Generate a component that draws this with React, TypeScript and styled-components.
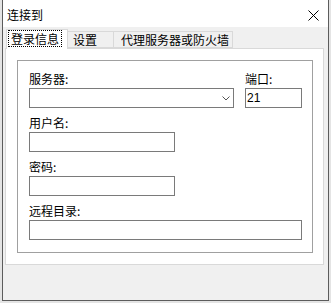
import React from "react";
import styled, { createGlobalStyle } from "styled-components";

const Global = createGlobalStyle`
  * { box-sizing: border-box; }
  html, body { margin: 0; padding: 0; }
  body {
    background: #e4e4e4;
    font-family: "Noto Sans CJK SC", "Noto Sans", sans-serif;
    font-size: 12px;
    color: #000;
  }
`;

const Window = styled.div`
  margin-left: 2px;
  width: 327px;
  height: 301px;
  border: 1px solid #5c5c5c;
  border-top: none;
  background: #f0f0f0;
  display: flex;
  flex-direction: column;
`;

const TitleBar = styled.div`
  height: 27px;
  background: #fff;
  display: flex;
  align-items: center;
  justify-content: space-between;
  padding: 2px 9px 0 4px;
  font-size: 12px;
  line-height: 14px;
`;

const CloseBox = styled.div`
  width: 11px;
  height: 11px;
  display: flex;
  margin-top: 1px;
`;

const TabStrip = styled.div`
  margin: 2px 0 0 3px;
  height: 19px;
  display: flex;
  align-items: flex-end;
  position: relative;
  z-index: 1;
`;

const Tab = styled.div<{ $active?: boolean; $w: number; $pl: number }>`
  width: ${(p) => p.$w}px;
  height: ${(p) => (p.$active ? 20 : 17)}px;
  margin-bottom: ${(p) => (p.$active ? -1 : 0)}px;
  padding-left: ${(p) => p.$pl}px;
  background: ${(p) => (p.$active ? "#fff" : "#f0f0f0")};
  border: 1px solid #d9d9d9;
  border-bottom: ${(p) => (p.$active ? "none" : "1px solid #d9d9d9")};
  border-left: ${(p) => (p.$active ? "1px solid #d9d9d9" : "none")};
  display: flex;
  align-items: ${(p) => (p.$active ? "flex-start" : "center")};
  padding-top: ${(p) => (p.$active ? 1 : 0)}px;
  line-height: 14px;
  white-space: nowrap;
`;

const FocusText = styled.span`
  outline: 1px dotted #000;
  outline-offset: 0;
  padding: 0 2px;
  line-height: 15px;
`;

const Panel = styled.div`
  margin: 0 4px 0 2px;
  background: #fff;
  border: 1px solid #d9d9d9;
  padding: 11px 10px 11px 11px;
`;

const Group = styled.div`
  border: 1px solid #a0a0a0;
  padding: 10px 10px 12px 11px;
  display: flex;
  flex-direction: column;
  gap: 7px;
`;

const Row = styled.div`
  display: flex;
  gap: 11px;
`;

const Field = styled.div<{ $w?: number }>`
  display: flex;
  flex-direction: column;
  gap: 2px;
  width: ${(p) => (p.$w ? `${p.$w}px` : "100%")};
`;

const Label = styled.div`
  height: 15px;
  line-height: 15px;
  font-size: 12px;
  white-space: nowrap;
`;

const Input = styled.div`
  height: 20px;
  border: 1px solid #7a7a7a;
  background: #fff;
  padding-left: 1px;
  line-height: 18px;
  font-family: "Liberation Sans", sans-serif;
  font-size: 12px;
`;

const Combo = styled(Input)`
  display: flex;
  align-items: center;
  justify-content: flex-end;
  padding-right: 3px;
`;

const Chevron = () => (
  <svg width="8" height="5" viewBox="0 0 8 5">
    <path d="M0.5 0.5 L4 4 L7.5 0.5" fill="none" stroke="#555" strokeWidth="1" />
  </svg>
);

const CloseIcon = () => (
  <svg width="11" height="11" viewBox="0 0 11 11">
    <path d="M0.5 0.5 L10.5 10.5 M10.5 0.5 L0.5 10.5" stroke="#000" strokeWidth="1" />
  </svg>
);

export default function App() {
  return (
    <>
      <Global />
      <Window>
        <TitleBar>
          <span>连接到</span>
          <CloseBox>
            <CloseIcon />
          </CloseBox>
        </TitleBar>
        <TabStrip>
          <Tab $active $w={62} $pl={2}>
            <FocusText>登录信息</FocusText>
          </Tab>
          <Tab $w={46} $pl={5}>设置</Tab>
          <Tab $w={119} $pl={7}>代理服务器或防火墙</Tab>
        </TabStrip>
        <Panel>
          <Group>
            <Row>
              <Field $w={205}>
                <Label>服务器:</Label>
                <Combo>
                  <Chevron />
                </Combo>
              </Field>
              <Field $w={57}>
                <Label>端口:</Label>
                <Input>21</Input>
              </Field>
            </Row>
            <Field $w={146}>
              <Label>用户名:</Label>
              <Input />
            </Field>
            <Field $w={146}>
              <Label>密码:</Label>
              <Input />
            </Field>
            <Field>
              <Label>远程目录:</Label>
              <Input />
            </Field>
          </Group>
        </Panel>
      </Window>
    </>
  );
}
